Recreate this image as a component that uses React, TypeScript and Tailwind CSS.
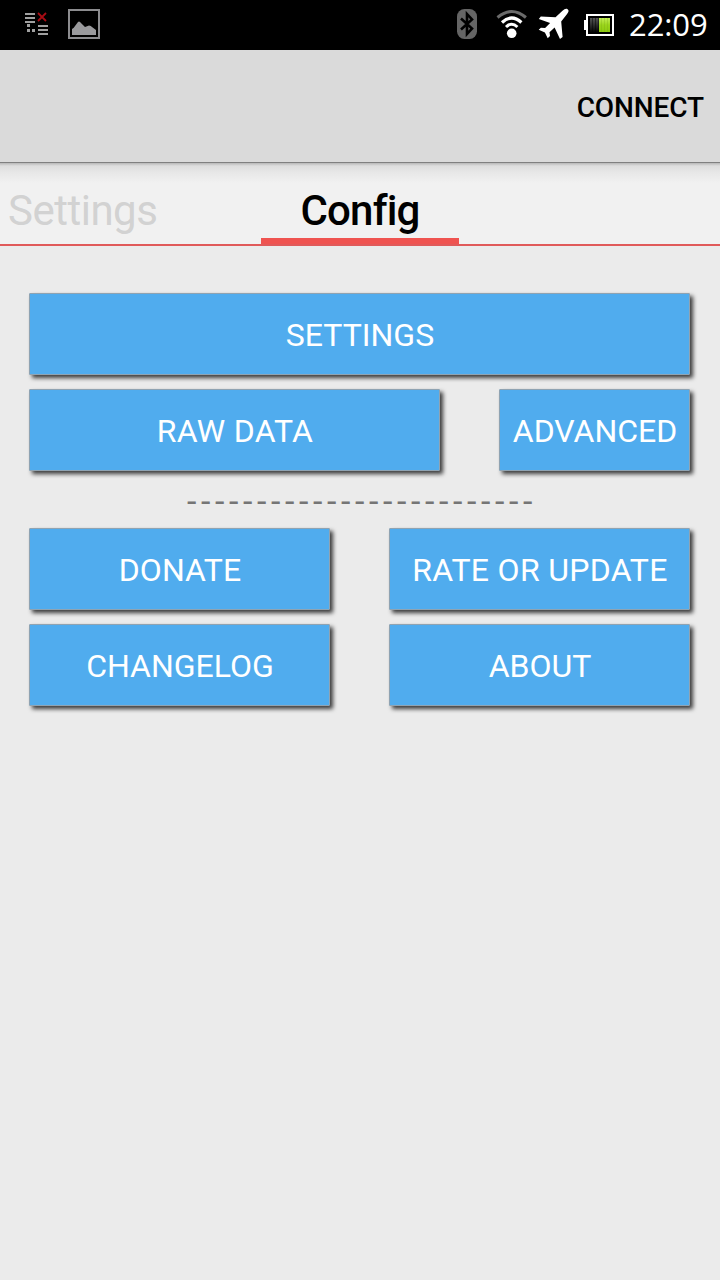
import type { ReactNode } from 'react';

function StatusBar() {
  return (
    <header className="h-[50px] bg-black flex items-start justify-between">
      <div className="flex pl-6">
        <svg width="24" height="50" viewBox="24 0 24 50" shapeRendering="crispEdges">
          <path d="M25 14h10M25 18h10M25 22h10M38 26h10M38 30h10M38 34h10" stroke="#a0a0a0" strokeWidth="2" />
          <path d="M27 24h3v3h-3zM27 29h3v3h-3zM32 29h3v3h-3z" fill="#a0a0a0" />
          <path d="M38 13l8 8M46 13l-8 8" stroke="#a80c14" strokeWidth="1.8" shapeRendering="auto" />
        </svg>
        <svg className="ml-5" width="32" height="50" viewBox="68 0 32 50">
          <rect x="69" y="10" width="30" height="28" fill="none" stroke="#8c8c8f" strokeWidth="2" />
          <path d="M72 35v-6q2-1 3-3l3-4q1-.8 2 0l5 5 4-1.5q2 0 3 1.5l4 3v5z" fill="#9a9a9d" />
        </svg>
      </div>
      <div className="flex">
        <svg width="174" height="50" viewBox="440 0 174 50">
          <rect x="457" y="9" width="20" height="30" rx="7.5" fill="#656565" />
          <path d="M461 18.5l11 10-5 5.5V14l5 5.5-11 10" fill="none" stroke="#000" strokeWidth="2.6" />
          <g fill="none">
            <path d="M497.5 17.5q14.2-12 28.4 0" stroke="#6a6a6a" strokeWidth="3" />
            <path d="M502 22.5q9.7-9 19.4 0" stroke="#fff" strokeWidth="3.2" />
            <path d="M506 27q5.7-5.5 11.4 0" stroke="#fff" strokeWidth="3" />
          </g>
          <circle cx="511.7" cy="33.3" r="4.8" fill="#fff" />
          <path
            d="M567.6 9.3c1.8 1.3.8 3-.7 4.9l-5.7 7.2 1.4 15.6-2.6 2-5.4-11.5-5.1 4.7.5 3.8-2.3 2.2-2.8-5.7-6.2-2.8 2.2-2 4.2.4 5-5.2-11.3-4 2-2.5 14.7.9 7-6.5c2-1.8 3.7-2.6 5.1-1.5z"
            fill="#fff"
          />
          <rect x="587" y="15" width="26" height="20" fill="none" stroke="#fff" strokeWidth="2" />
          <path d="M584 20h2v10h-2z" fill="#fff" />
          <path d="M590 18h9v14h-9z" fill="url(#batteryEmpty)" />
          <path d="M599 18h11v14h-11z" fill="url(#batteryFull)" />
          <path d="M592.5 18v14M595.5 18v14M598.5 18v14" stroke="#000" strokeOpacity=".45" />
          <path d="M601.5 18v14M604.5 18v14M607.5 18v14" stroke="#6f9c13" strokeOpacity=".25" />
          <defs>
            <linearGradient id="batteryEmpty" x2="0" y2="1">
              <stop stopColor="#555" />
              <stop offset="1" stopColor="#050505" />
            </linearGradient>
            <linearGradient id="batteryFull" x2="0" y2="1">
              <stop stopColor="#c2ee55" />
              <stop offset=".5" stopColor="#9bd51c" />
              <stop offset="1" stopColor="#8dca10" />
            </linearGradient>
          </defs>
        </svg>
        <span className="w-[106px] pl-[15px] text-[31px] leading-[48px] tracking-[-0.1px] text-white font-['Open_Sans',sans-serif]">
          22:09
        </span>
      </div>
    </header>
  );
}

function Button({ children, className = '' }: { children: ReactNode; className?: string }) {
  return (
    <button
      className={`h-[82px] pt-0.5 pl-px border border-[#8fa3b2] rounded-[1px] bg-[#50acee] text-white text-[32px] whitespace-nowrap shadow-[3px_3px_4px_rgba(0,0,0,0.75)] ${className}`}
    >
      {children}
    </button>
  );
}

export default function App() {
  return (
    <div className="w-[720px] h-[1280px] overflow-hidden bg-[#ebebeb] font-[Roboto,sans-serif]">
      <StatusBar />

      <div className="h-[113px] pt-1 bg-[#dadada] border-b border-[#808080] flex items-center justify-end pr-4">
        <button className="text-[28px] tracking-[-0.1px] font-medium text-black">CONNECT</button>
      </div>

      <nav className="h-[83px] grid grid-cols-[261px_198px_261px] border-b-2 border-[#e05a5a] bg-[linear-gradient(#b8b8b8_0px,#dedede_3px,#e7e7e7_9px,#f1f1f1_20px)] text-[42px] leading-[96px]">
        <span className="pl-2 tracking-[-0.5px] text-[#d2d2d2]">Settings</span>
        <span className="h-[81px] text-center tracking-[-0.8px] font-medium text-black border-b-[6px] border-[#ef5350]">
          Config
        </span>
      </nav>

      <main className="pt-[47px] pl-[29px] pr-[30px]">
        <div className="flex flex-col gap-[14px]">
          <Button>SETTINGS</Button>
          <div className="flex justify-between">
            <Button className="w-[411px] tracking-[0.3px]">RAW DATA</Button>
            <Button className="w-[191px]">ADVANCED</Button>
          </div>
        </div>
        <div className="h-[57px] pl-[158px] text-[34px] leading-[61px] tracking-[4.6px] text-[#757575] whitespace-nowrap">
          -------------------------
        </div>
        <div className="grid grid-cols-[301px_301px] justify-between gap-y-[14px]">
          <Button>DONATE</Button>
          <Button className="tracking-[0.3px]">RATE OR UPDATE</Button>
          <Button>CHANGELOG</Button>
          <Button>ABOUT</Button>
        </div>
      </main>
    </div>
  );
}
